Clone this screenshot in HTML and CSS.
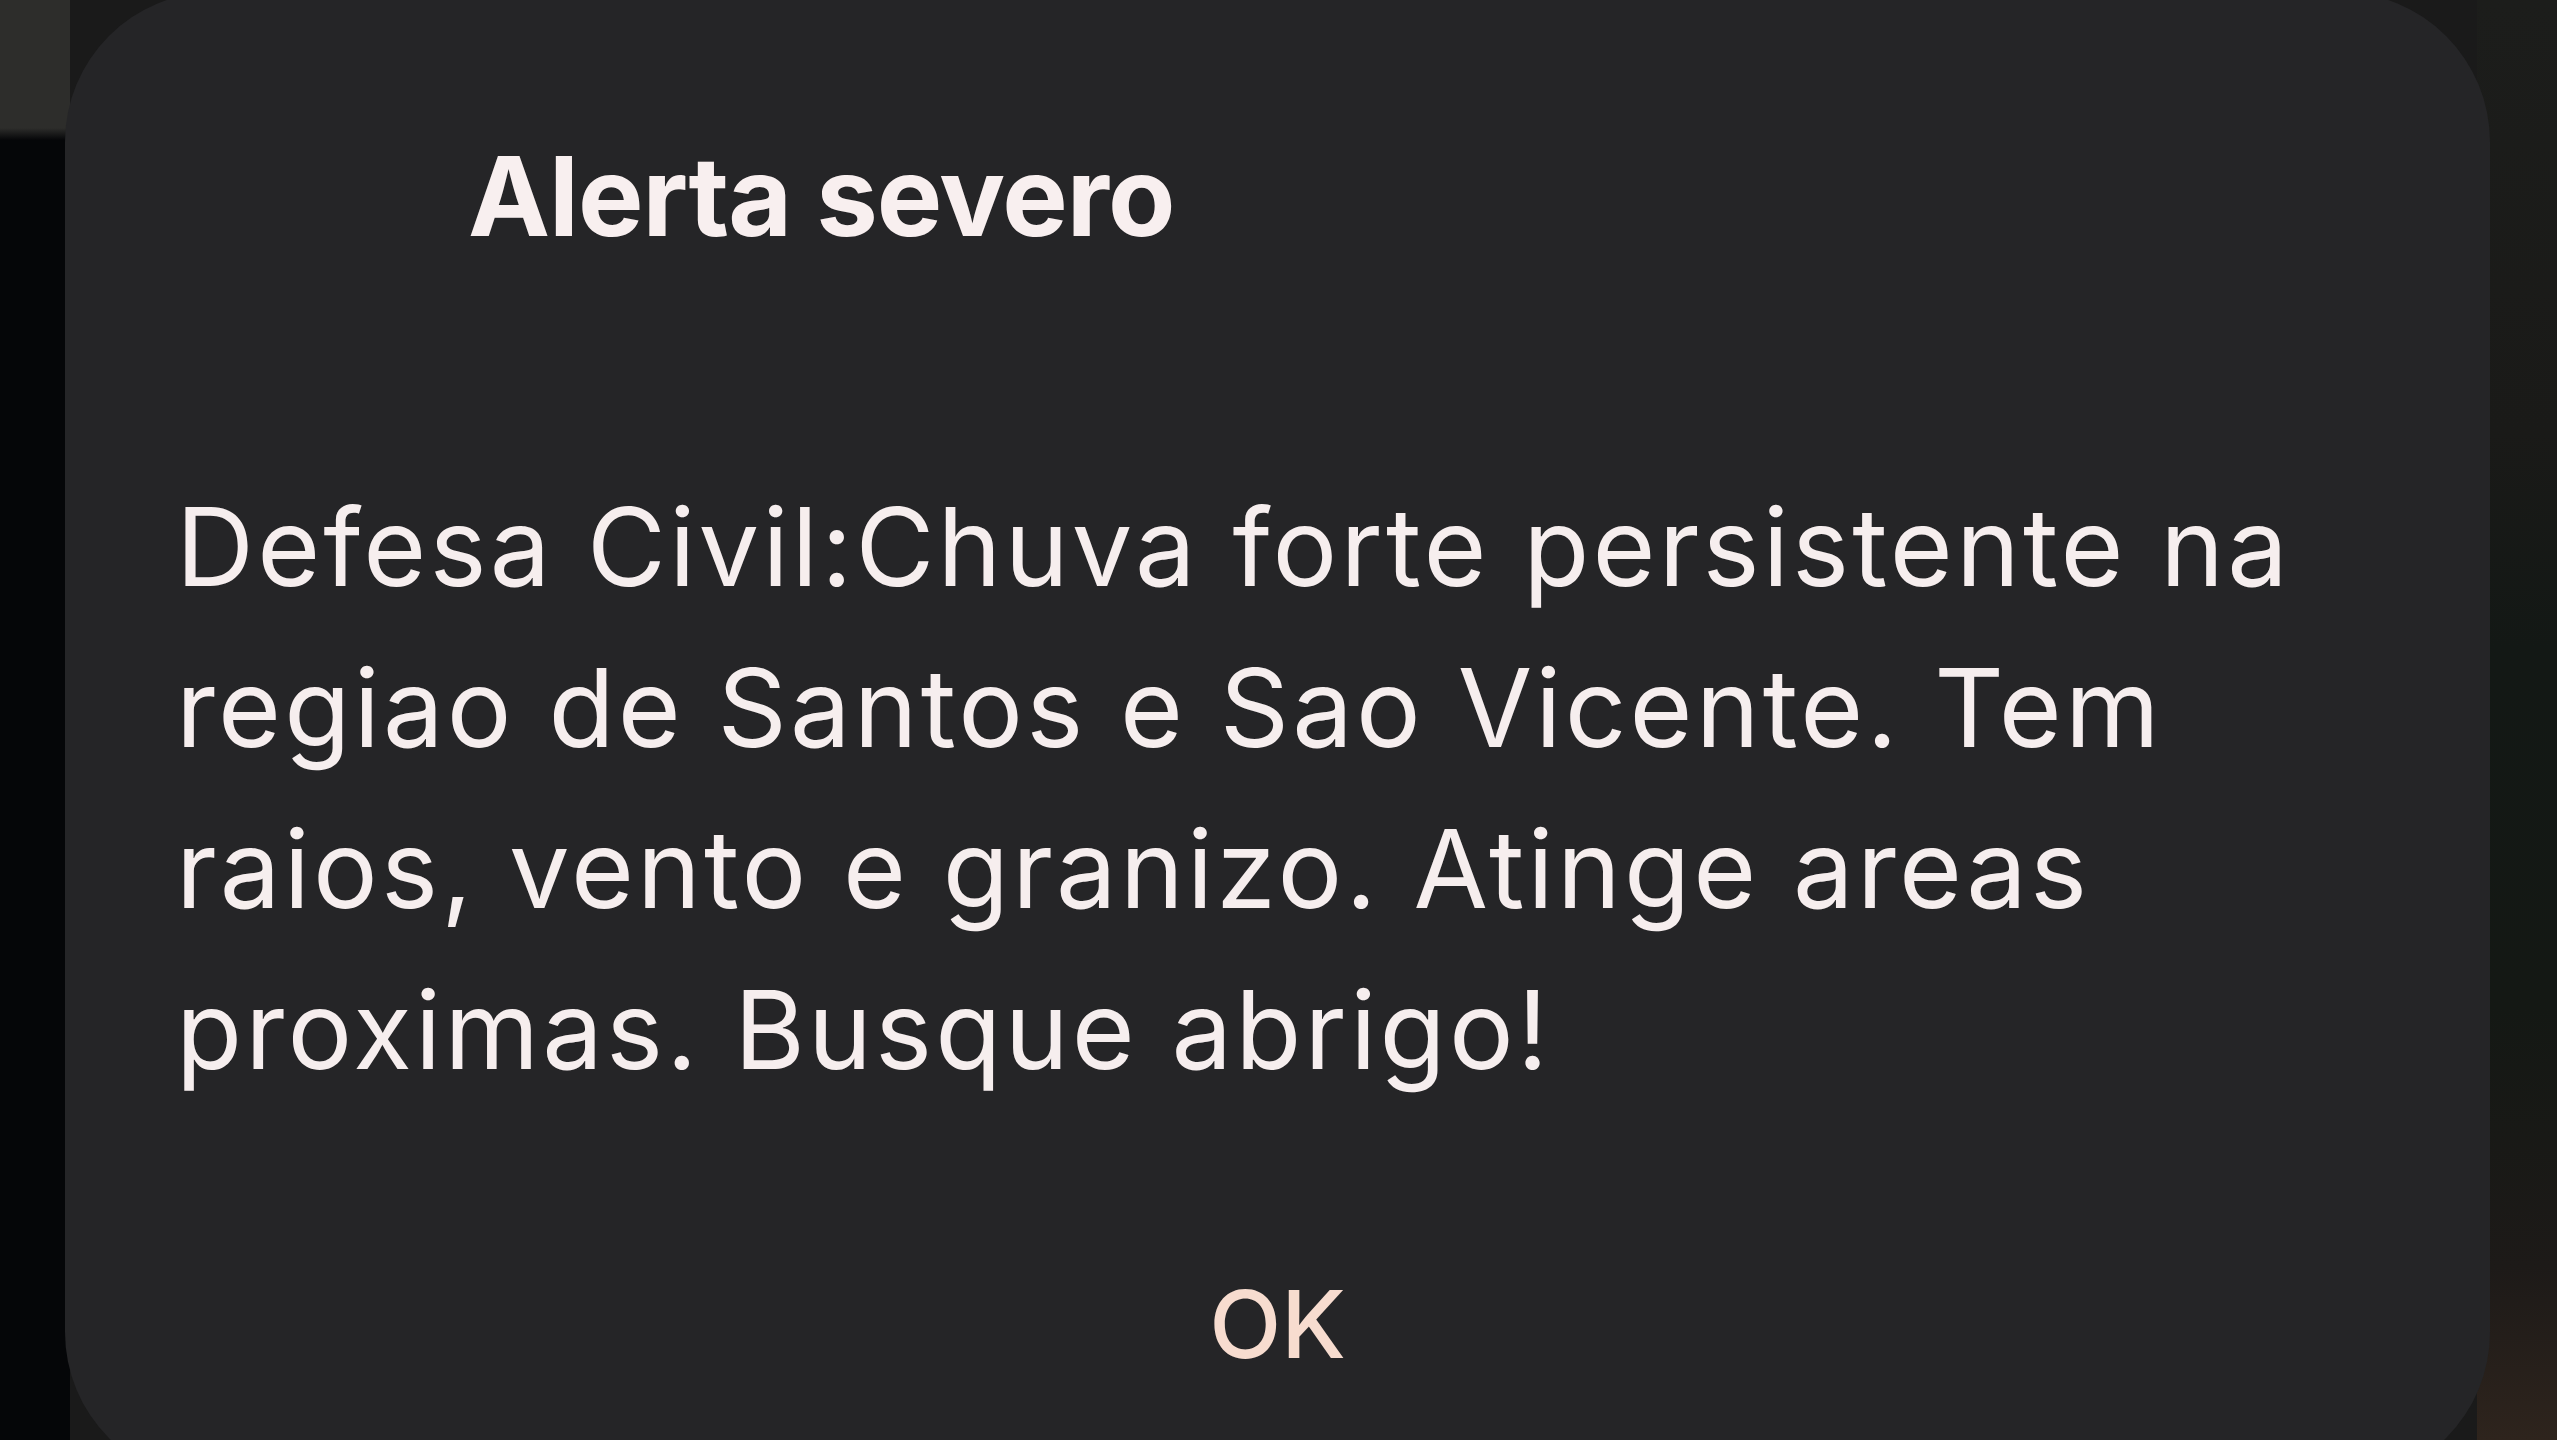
FILE: index.html
```html
<!DOCTYPE html>
<html lang="pt-BR">
<head>
<meta charset="utf-8">
<title>Alerta severo</title>
<link rel="stylesheet" href="styles.css">
</head>
<body>
<div class="scene">
  <div class="dialog" role="alertdialog" aria-labelledby="t">
    <h1 class="title" id="t">Alerta severo</h1>
    <p class="message">Defesa Civil:Chuva forte persistente na<br>regiao de Santos e Sao Vicente. Tem<br>raios, vento e granizo. Atinge areas<br>proximas. Busque abrigo!</p>
    <div class="actions">
      <button class="ok" type="button">OK</button>
    </div>
  </div>
</div>
</body>
</html>
```

FILE: styles.css
```css
html, body {
  margin: 0;
  padding: 0;
  width: 2557px;
  height: 1440px;
  overflow: hidden;
}

body {
  background:
    linear-gradient(to bottom, #2d2d2b 0, #2d2d2b 128px, #050608 140px, #050608 100%) left top / 70px 100% no-repeat,
    linear-gradient(to bottom, #1c1d1b 0%, #1a1a18 30%, #131815 45%, #141814 70%, #1d1a18 88%, #2e241d 100%) right top / 80px 100% no-repeat,
    #1a1a1a;
  font-family: Inter, Roboto, "Liberation Sans", sans-serif;
}

.scene {
  display: flex;
  padding-left: 65px;
}

.dialog {
  width: 2425px;
  height: 1490px;
  margin-top: -8px;
  background: #252527;
  border-radius: 150px;
  display: flex;
  flex-direction: column;
  box-sizing: border-box;
  padding: 137px 0 0 0;
}

.title {
  margin: 0;
  padding-left: 403px;
  font-size: 110px;
  line-height: 134px;
  font-weight: 700;
  color: #f8efef;
  letter-spacing: -1px;
}

.message {
  margin: 203px 0 0 0;
  padding-left: 111px;
  font-size: 108px;
  line-height: 161px;
  font-weight: 400;
  color: #f6eeee;
  letter-spacing: 3.2px;
}

.actions {
  display: flex;
  justify-content: center;
  margin-top: 166px;
}

.ok {
  background: none;
  border: 0;
  padding: 0;
  font-family: Inter, Roboto, "Liberation Sans", sans-serif;
  font-size: 94px;
  line-height: 96px;
  font-weight: 500;
  color: #f7dccf;
}
```
